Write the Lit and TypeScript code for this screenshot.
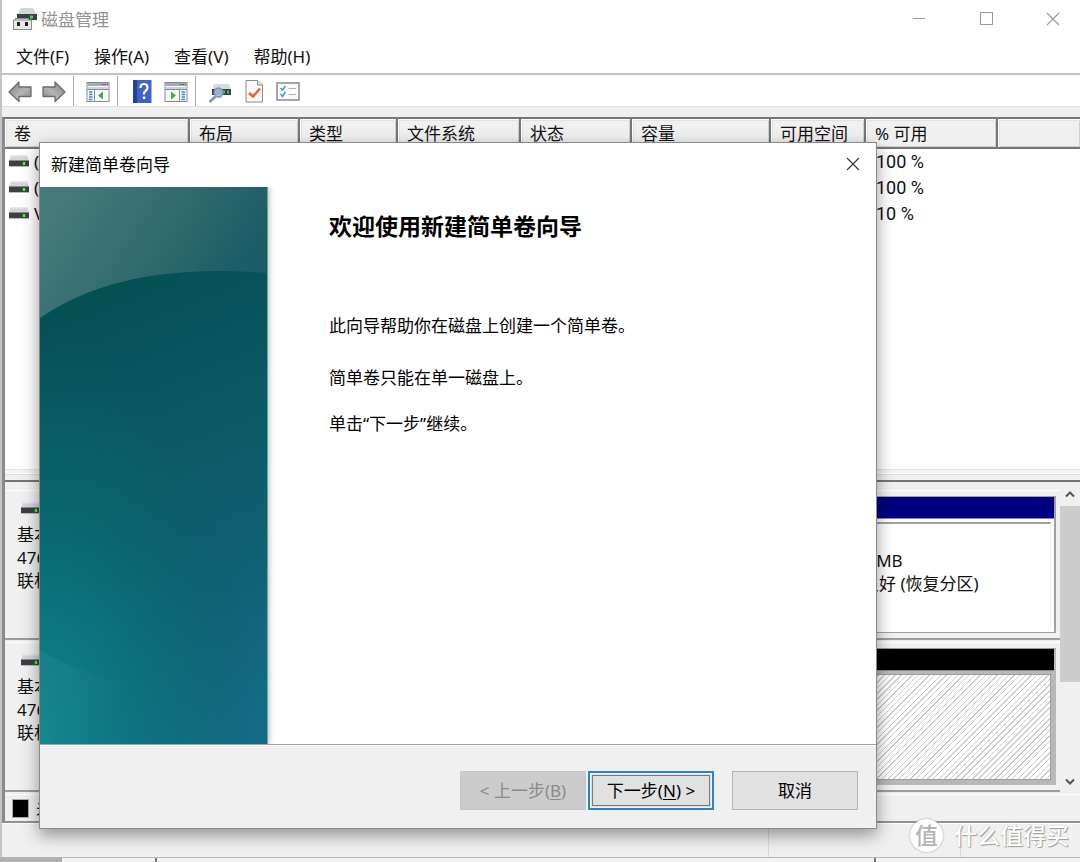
import { LitElement, html, css, svg } from "lit";
import { customElement } from "lit/decorators.js";

const driveIcon = html`<svg class="drive" viewBox="0 0 20 12" width="20" height="12" aria-hidden="true">
  <path d="M2 0h16l2 6H0z" fill="#d3d7db" />
  <path d="M2 0h16l.6 1.500H1.500z" fill="#e6e9ec" />
  <rect y="5.500" width="20" height="5.500" fill="#3d4043" />
  <rect y="11" width="20" height="1" fill="#b9bcbf" />
  <rect x="13" y="7" width="4" height="3" fill="#1f7a1f" />
  <rect x="14" y="7" width="2" height="3" fill="#4ff04f" />
</svg>`;

const arrowShape = svg`
  <defs><linearGradient id="metal" x1="0" y1="0" x2="1" y2="1">
    <stop offset="0" stop-color="#7d7d7d" /><stop offset=".55" stop-color="#b4b4b4" /><stop offset="1" stop-color="#848484" />
  </linearGradient></defs>
  <path d="M1 13 11 3v5h12v9.500H11v5z" fill="url(#metal)" stroke="#6c6c6c" stroke-width="1.300" stroke-linejoin="round" />`;

const panelIcon = (arrow: string, flip: boolean) => html`<svg viewBox="0 0 24 24" width="24" height="24" aria-hidden="true">
  <rect x="1" y="3.500" width="22" height="19" fill="#f7f8f9" stroke="#858b92" />
  <rect x="1.500" y="4" width="21" height="3" fill="#a3abb5" />
  <path d="M16 5.500h1.500M18.500 5.500H20M21 5.500h1" stroke="#4d5661" />
  <rect x="1.500" y="8" width="21" height="2" fill="#cdd2d8" />
  <path d="M1 10.500h22" stroke="#858b92" />
  <path d=${flip ? "M15.500 11v11" : "M8.500 11v11"} stroke="#858b92" />
  <path d=${flip ? "M17.500 13H21M17.500 15.500H21M17.500 18H21M17.500 20.500H21" : "M3 13h3.500M3 15.500h3.500M3 18h3.500M3 20.500h3.500"} stroke="#4a86c5" stroke-width="1.400" />
  <path d=${arrow} fill="#3fb030" />
</svg>`;

const close = html`<svg viewBox="0 0 14 14" width="14" height="14" aria-hidden="true"><path d="M1 1l12 12M13 1 1 13" fill="none" stroke="currentColor" stroke-width="1.100" /></svg>`;

const base = css`
  *, *::before, *::after { box-sizing: border-box; }
  button {
    font: inherit; color: inherit; background: none; border: 0; padding: 0; margin: 0;
    display: flex; align-items: center; justify-content: center;
  }
  svg { display: block; flex: none; }
`;

@customElement("wizard-dialog")
class WizardDialog extends LitElement {
  static styles = [base, css`
    :host {
      display: block; background: #fff; border: 1px solid #8a8a8a; color: #000;
      box-shadow: 0 6px 16px rgba(0, 0, 0, .4);
    }
    .title { display: flex; align-items: center; justify-content: space-between; height: 44px; padding: 0 16px 2px 11px; }
    .title h1 { margin: 0; font-size: 17px; font-weight: 400; }
    .title button { color: #333; }
    .body { display: flex; min-height: 557px; }
    .banner { flex: none; width: 228px; border-right: 1px solid #6f9fa5; box-shadow: 0 0 6px 1px rgba(0, 0, 0, .28); clip-path: inset(0 -10px 0 0); }
    .banner svg { width: 100%; height: 100%; }
    .text { padding: 23px 24px 24px 61px; line-height: 26px; }
    .text h2 { margin: 0 0 71px; font-size: 23px; line-height: 32px; font-weight: 700; }
    .text p { margin: 0 0 26px; }
    .text p.close-up { margin: 0 0 20px; }
    footer {
      display: flex; justify-content: flex-end; padding: 26px 18px 18px;
      border-top: 1px solid #a0a0a0; background: #f0f0f0;
      box-shadow: inset 0 1px #fff;
    }
    footer button { width: 126px; height: 39px; border: 1px solid #b4b4b4; background: #e1e1e1; white-space: pre; }
    footer .back { background: #ccc; border-color: #c6c6c6; color: #8b8b8b; }
    footer .next { margin: 0 18px 0 2px; border: 2px solid #2a83d0; outline: 1px solid #7b7b7b; outline-offset: -5px; box-shadow: inset 0 0 0 1px #eef4fa; }
    u { text-underline-offset: 2px; text-decoration-thickness: 1px; }
  `];

  render() {
    return html`
      <div class="title"><h1>新建简单卷向导</h1><button aria-label="关闭">${close}</button></div>
      <div class="body">
        <div class="banner">
          <svg viewBox="0 0 228 557" preserveAspectRatio="none" aria-hidden="true">
            <defs>
              <linearGradient id="deep" gradientUnits="userSpaceOnUse" x1="30" y1="120" x2="200" y2="540">
                <stop offset="0" stop-color="#045154" /><stop offset=".5" stop-color="#0c5c6c" /><stop offset="1" stop-color="#156b87" />
              </linearGradient>
              <linearGradient id="sky" gradientUnits="userSpaceOnUse" x1="30" y1="0" x2="200" y2="110">
                <stop offset="0" stop-color="#457b79" /><stop offset=".5" stop-color="#316a6f" /><stop offset="1" stop-color="#195b64" />
              </linearGradient>
              <radialGradient id="glow" gradientUnits="userSpaceOnUse" cx="0" cy="0" r="1" gradientTransform="translate(0 557) scale(220 420)">
                <stop offset="0" stop-color="#0d888c" stop-opacity=".9" />
                <stop offset=".35" stop-color="#0a7f82" stop-opacity=".6" />
                <stop offset=".7" stop-color="#077070" stop-opacity=".3" />
                <stop offset="1" stop-color="#045c58" stop-opacity="0" />
              </radialGradient>
              <linearGradient id="sheen" gradientUnits="userSpaceOnUse" x1="0" y1="480" x2="80" y2="510">
                <stop offset="0" stop-color="#fff" stop-opacity=".05" /><stop offset="1" stop-color="#fff" stop-opacity="0" />
              </linearGradient>
            </defs>
            <rect width="228" height="557" fill="url(#deep)" />
            <rect width="228" height="557" fill="url(#glow)" />
            <path d="M0 0h228v86Q82 74 0 131z" fill="url(#sky)" />
            <path d="M0 463Q30 482 80 496V557H0z" fill="url(#sheen)" />
          </svg>
        </div>
        <div class="text">
          <h2>欢迎使用新建简单卷向导</h2>
          <p>此向导帮助你在磁盘上创建一个简单卷。</p>
          <p class="close-up">简单卷只能在单一磁盘上。</p>
          <p>单击“下一步”继续。</p>
        </div>
      </div>
      <footer>
        <button class="back" disabled>&lt; 上一步(<u>B</u>)</button>
        <button class="next">下一步(<u>N</u>) &gt;</button>
        <button>取消</button>
      </footer>`;
  }
}

@customElement("app-root")
class AppRoot extends LitElement {
  static styles = [base, css`
    :host {
      display: block; position: relative; min-height: 100vh; overflow: hidden;
      font: 17px/23px "Noto Sans", "Noto Sans CJK SC", sans-serif; color: #111; background: #f0f0f0;
    }
    .screen { display: flex; flex-direction: column; min-height: 100vh; background: #c4c4c4; }
    .window { flex: 1; display: flex; flex-direction: column; margin-left: 2px; background: #f0f0f0; }
    .titlebar { display: flex; align-items: center; height: 38px; padding: 0 20px 0 11px; background: #fff; color: #929292; }
    .titlebar .name { flex: 1; margin-left: 4px; }
    .controls { display: flex; gap: 53px; color: #999; }
    .menu { display: flex; gap: 25px; height: 35px; padding: 2px 14px 0; background: #fff; }
    .toolbar {
      display: flex; align-items: center; height: 34px; padding-left: 6px;
      background: #fff; border-top: 2px solid #bfc1c5; border-bottom: 1px solid #e2e2e2;
    }
    .toolbar button { width: 24px; height: 24px; margin-right: 10px; }
    .toolbar button.last { margin-right: 7px; }
    .toolbar i { width: 1px; height: 30px; margin-right: 12px; background: #a9a9a9; }
    .flip { transform: scaleX(-1); }
    .panes { flex: 1; display: flex; flex-direction: column; margin-top: 10px; border-top: 2px solid #777; border-left: 3px solid #8a8a8a; }
    .list { flex: 1; background: #fff; overflow: hidden; }
    table { width: 100%; table-layout: fixed; border-collapse: separate; border-spacing: 0; }
    th {
      height: 30px; padding: 0 0 0 9px; text-align: left; font-weight: 400; white-space: nowrap;
      background: #f0f0f0; border-right: 2px solid #767676; border-bottom: 2px solid #767676;
      box-shadow: inset 1px 1px #fff, inset 2px 2px #e2e2e2, inset -1px -1px #cfcfcf;
    }
    th:last-child { border-right: 0; }
    td { height: 26px; padding: 0 0 2px; white-space: nowrap; }
    td.pct { padding-left: 10px; font-family: Roboto, "Noto Sans CJK SC", sans-serif; font-size: 18px; }
    .volume { display: flex; align-items: center; gap: 5px; padding-left: 4px; }
    .c1 { width: 185px; } .c2 { width: 110px; } .c3 { width: 98px; } .c4 { width: 123px; } .c5 { width: 111px; }
    .c6 { width: 139px; } .c7 { width: 95px; } .c8 { width: 132px; }
    .split { height: 13px; border-bottom: 2px solid #747474; border-top: 1px solid #e4e4e4; background: linear-gradient(#f3f3f3 3px, #fff 3px 4px, #dcdcdc 4px 5px, #f0f0f0 5px); }
    .graph { display: flex; }
    .disks { flex: 1; min-width: 0; padding-top: 8px; }
    .disk {
      display: flex; gap: 2px; height: 150px; margin-bottom: 2px; padding: 5px 4px 5px 0;
      border-top: 1px solid #fff; border-bottom: 2px solid #9c9c9c;
    }
    .label { width: 135px; padding: 6px 0 0 12px; }
    .label .drive { margin: 0 0 9px 4px; }
    .part { flex: 1; display: flex; flex-direction: column; border: 1px solid #a0a0a0; border-right-width: 2px; background: #fff; }
    .part.end { flex: none; width: 199px; }
    .bar { height: 22px; background: #000080; border-bottom: 1px solid #8b8b8b; }
    .bar.black { background: #000; }
    .info { flex: 1; margin: 3px 3px 4px 0; padding: 25px 0 0 4px; border-top: 2px solid #a0a0a0; border-right: 1px solid #eee; white-space: nowrap; }
    .part.free { border-color: #b8b8b8; border-top-color: #999; background: #b8b8b8; }
    .hatch { flex: 1; margin: 3px 3px 4px 0; border: 1px solid #9d9d9d; background: repeating-linear-gradient(135deg, #fff 0 3px, #cdcdcd 3px 4px); }
    .scroll { width: 20px; display: flex; flex-direction: column; background: #f0f0f0; color: #555; }
    .scroll button { height: 24px; }
    .thumb { flex: none; height: 176px; background: #cdcdcd; }
    .rest { flex: 1; }
    .legend { display: flex; align-items: center; gap: 7px; height: 29px; padding-left: 7px; border-top: 1px solid #fff; border-bottom: 2px solid #929292; }
    .swatch { width: 17px; height: 19px; border: 1px solid #aaa; background: #000; }
    .status { display: flex; justify-content: flex-end; height: 34px; padding-top: 4px; border-top: 1px solid #fff; }
    .status span { width: 192px; border-left: 1px solid #dadada; }
    .status span:last-child { width: 120px; }
    .behind { display: flex; height: 5px; border-top: 1px solid #b5b5b5; background: #f4f4f4; }
    .behind b { width: 62px; background: #b0b0b0; }
    .behind i { flex: none; width: 95px; border-right: 2px solid #777; }
    .behind i.far { width: 719px; }
    wizard-dialog { position: absolute; left: 39px; top: 142px; width: 838px; }
    .mark {
      position: absolute; right: 11px; bottom: 10px; display: flex; align-items: center; gap: 11px;
      font-size: 23px; line-height: 34px; font-weight: 500; color: #fff; text-shadow: 1px 1px 1px #999, 0 0 1px #bbb;
    }
    .mark b {
      width: 33px; height: 33px; border-radius: 50%; background: #fff; color: #b5b5b5; box-shadow: 0 0 2px #999;
      font-size: 23px; font-weight: 500; line-height: 32px; text-align: center; text-shadow: none;
    }
  `];

  private columns = ["卷", "布局", "类型", "文件系统", "状态", "容量", "可用空间", "% 可用", ""];
  private volumes = [["(", "100 %"], ["(", "100 %"], ["V", "10 %"]];

  private label() {
    return html`<div class="label">${driveIcon}<div>基本</div><div>476</div><div>联机</div></div>`;
  }

  render() {
    return html`
      <div class="screen">
        <div class="window">
          <header class="titlebar">
            <svg viewBox="0 0 24 24" width="24" height="24" aria-hidden="true">
              <path d="M8 1h12l4 7H4z" fill="#d3d6d9" />
              <rect x="4" y="7" width="20" height="6" fill="#3c3f42" />
              <rect x="17" y="8.500" width="3" height="3" fill="#3ee03e" />
              <rect x="2.500" y="11.500" width="13" height="4" fill="#f0f0f0" stroke="#8c8c8c" />
              <rect x=".5" y="13" width="18" height="9.500" fill="#e9e9e9" stroke="#8c8c8c" />
              <path d="M5.500 15v4M13.500 15v4" stroke="#222" stroke-width="3" />
            </svg>
            <span class="name">磁盘管理</span>
            <div class="controls">
              <button aria-label="最小化"><svg viewBox="0 0 14 14" width="14" height="14"><path d="M1 6.500h12" stroke="currentColor" /></svg></button>
              <button aria-label="最大化"><svg viewBox="0 0 14 14" width="14" height="14"><rect x="1.500" y=".5" width="12" height="12" fill="none" stroke="currentColor" /></svg></button>
              <button aria-label="关闭">${close}</button>
            </div>
          </header>
          <nav class="menu">
            <button>文件(F)</button><button>操作(A)</button><button>查看(V)</button><button>帮助(H)</button>
          </nav>
          <div class="toolbar">
            <button aria-label="后退"><svg viewBox="0 0 24 24" width="24" height="24">${arrowShape}</svg></button>
            <button class="last" aria-label="前进"><svg class="flip" viewBox="0 0 24 24" width="24" height="24">${arrowShape}</svg></button>
            <i></i>
            <button class="last" aria-label="显示/隐藏控制台树">${panelIcon("M12 16.500 17 12.500v8z", false)}</button>
            <i></i>
            <button aria-label="帮助">
              <svg viewBox="0 0 24 24" width="24" height="24">
                <rect x="3" y="1" width="18.500" height="23" fill="#3f62c6" />
                <rect x="3" y="1" width="4" height="23" fill="#25409a" />
                <path d="M10.500 9Q10.500 5 14 5t3.500 3.500q0 2-2 3.500T14 15.500" fill="none" stroke="#fff" stroke-width="2.200" />
                <rect x="12.800" y="17.500" width="2.500" height="2.500" fill="#fff" />
              </svg>
            </button>
            <button class="last" aria-label="操作窗格">${panelIcon("M12 16.500 7 12.500v8z", true)}</button>
            <i></i>
            <button aria-label="重新扫描磁盘">
              <svg viewBox="0 0 24 24" width="24" height="24">
                <path d="M6 5h15l2 6H4z" fill="#d7dadd" />
                <rect x="4" y="10" width="19" height="6" fill="#3c3f42" />
                <rect x="15" y="11.500" width="2" height="3" fill="#35d935" /><rect x="19" y="11.500" width="2" height="3" fill="#35d935" />
                <path d="M7.500 17.500 1.500 23" stroke="#8293a6" stroke-width="2.500" />
                <circle cx="10.500" cy="13.500" r="4.500" fill="#9cc0de" fill-opacity=".9" stroke="#7796b3" stroke-width="1.300" />
              </svg>
            </button>
            <button aria-label="属性">
              <svg viewBox="0 0 24 24" width="24" height="24">
                <path d="M4 1.500h11.500L20.500 6v17H4z" fill="#fafafa" stroke="#8a8a8a" />
                <path d="M15.500 1.500V6h5" fill="#ddd" stroke="#8a8a8a" />
                <path d="M7 14 11 17.500l7-8" fill="none" stroke="#f0622a" stroke-width="2.400" />
              </svg>
            </button>
            <button aria-label="设置">
              <svg viewBox="0 0 24 24" width="24" height="24">
                <rect x="1" y="4" width="22" height="17" fill="#f9f9f9" stroke="#858b92" stroke-width="1.500" />
                <path d="M4.500 9l2 2 3-4M4.500 15l2 2.500 3-4.500" fill="none" stroke="#3f97dd" stroke-width="1.500" />
                <path d="M12.500 9.500h7.500M12.500 15.500h7.500" stroke="#b0b0b0" stroke-width="1.200" />
              </svg>
            </button>
          </div>
          <main class="panes">
            <div class="list">
              <table>
                <thead><tr>${this.columns.map((c, i) => html`<th class="c${i + 1}">${c}</th>`)}</tr></thead>
                <tbody>${this.volumes.map(([name, pct]) => html`<tr>
                  <td><div class="volume">${driveIcon}<span>${name}</span></div></td>
                  <td colspan="5"></td><td></td><td class="pct">${pct}</td><td></td>
                </tr>`)}</tbody>
              </table>
            </div>
            <div class="split"></div>
            <div class="graph">
              <div class="disks">
                <section class="disk">
                  ${this.label()}
                  <div class="part"><div class="bar"></div></div>
                  <div class="part end"><div class="bar"></div><div class="info"><div>9 MB</div><div>良好 (恢复分区)</div></div></div>
                </section>
                <section class="disk">
                  ${this.label()}
                  <div class="part free"><div class="bar black"></div><div class="hatch"></div></div>
                </section>
              </div>
              <div class="scroll">
                <button aria-label="向上滚动"><svg viewBox="0 0 12 8" width="12" height="8"><path d="M2 6.500 6 2.500l4 4" fill="none" stroke="currentColor" stroke-width="2" /></svg></button>
                <div class="thumb"></div><div class="rest"></div>
                <button aria-label="向下滚动"><svg viewBox="0 0 12 8" width="12" height="8"><path d="M2 1.500l4 4 4-4" fill="none" stroke="currentColor" stroke-width="2" /></svg></button>
              </div>
            </div>
            <div class="legend"><span class="swatch"></span><span>未分配</span></div>
          </main>
          <footer class="status"><span></span><span></span></footer>
        </div>
        <div class="behind"><b></b><i></i><i class="far"></i></div>
      </div>
      <wizard-dialog role="dialog" aria-label="新建简单卷向导"></wizard-dialog>
      <div class="mark"><b>值</b><span>什么值得买</span></div>`;
  }
}
